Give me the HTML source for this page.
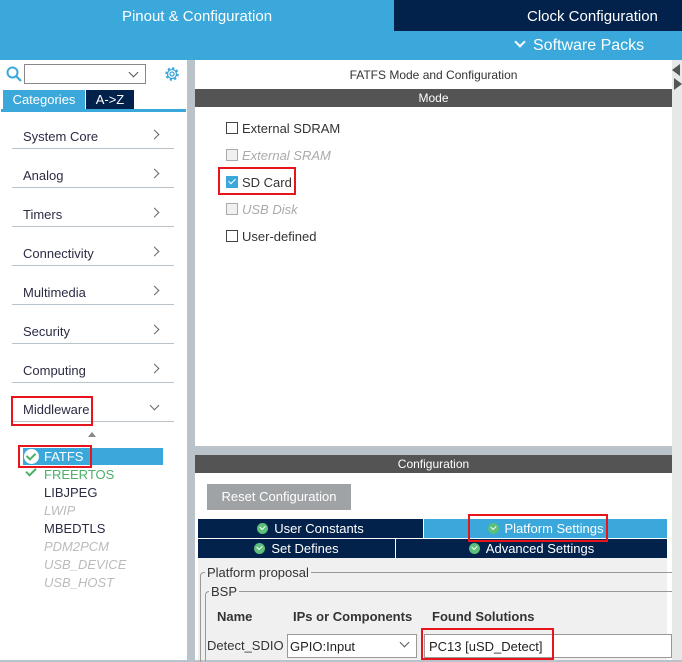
<!DOCTYPE html>
<html><head><style>
*{margin:0;padding:0;box-sizing:border-box}
body{width:682px;height:660px;overflow:hidden;font-family:"Liberation Sans",sans-serif;background:#b9c3c9;position:relative;font-size:13px}
.a{position:absolute}
.red{position:absolute;border:2px solid #e8141c}
.item{position:absolute;left:23px;color:#2c2c44;font-size:13px}
.line{position:absolute;left:12px;width:162px;height:1px;background:#b9c3c9}
.chev{position:absolute;left:151px;width:7px;height:7px;border-top:1px solid #666;border-right:1px solid #666;transform:rotate(45deg)}
.cb{position:absolute;left:226px;width:12px;height:12px;border:1px solid #444;background:#fff}
.cbl{position:absolute;left:242px;font-size:13px;color:#333}
.ck{display:inline-block;width:11px;height:11px;border-radius:50%;background:#5cbf7a;vertical-align:-1px;margin-right:6px;position:relative}
.ck:after{content:"";position:absolute;left:3px;top:2px;width:4px;height:3px;border-left:1.5px solid #fff;border-bottom:1.5px solid #fff;transform:rotate(-45deg)}
.tab{position:absolute;color:#fff;text-align:center;font-size:13px;line-height:19px;background:#03224b}
</style></head><body>
<div class="a" style="left:0;top:0;width:682px;height:60px;background:#3aa8db"></div>
<div class="a" style="left:0;top:8px;width:394px;text-align:center;color:#fff;font-size:15px;padding-left:0px">Pinout &amp; Configuration</div>
<div class="a" style="left:394px;top:0;width:288px;height:31px;background:#03224b"></div>
<div class="a" style="left:527px;top:8px;color:#fff;font-size:15px">Clock Configuration</div>
<div class="a" style="left:516px;top:37px;color:#fff;font-size:16px"><span style="display:inline-block;width:8px;height:8px;border-right:2px solid #fff;border-bottom:2px solid #fff;transform:rotate(45deg);margin-right:9px;vertical-align:4px"></span>Software Packs</div>

<!-- left panel -->
<div class="a" style="left:0;top:60px;width:187px;height:600px;background:#fff"></div>
<svg class="a" style="left:6px;top:66px" width="16" height="16"><circle cx="6.5" cy="6.5" r="5" fill="none" stroke="#3aa8db" stroke-width="2"/><line x1="10" y1="10" x2="15" y2="15" stroke="#3aa8db" stroke-width="2.2"/></svg>
<div class="a" style="left:24px;top:64px;width:122px;height:20px;border:1px solid #888;background:#fff"></div>
<div class="a" style="left:130px;top:69px;width:7px;height:7px;border-right:1px solid #555;border-bottom:1px solid #555;transform:rotate(45deg)"></div>
<svg class="a" style="left:163px;top:65px" width="18" height="18" viewBox="0 0 18 18"><circle cx="9" cy="9" r="5.5" fill="none" stroke="#3aa8db" stroke-width="2.5" stroke-dasharray="2.2 2.1"/><circle cx="9" cy="9" r="4.5" fill="none" stroke="#3aa8db" stroke-width="1.3"/><circle cx="9" cy="9" r="2" fill="none" stroke="#3aa8db" stroke-width="1.3"/></svg>
<div class="a" style="left:3px;top:90px;width:82px;height:19px;background:#3aa8db;color:#fff;font-size:13px;line-height:19px;text-align:center">Categories</div>
<div class="a" style="left:86px;top:90px;width:48px;height:19px;background:#03224b;color:#fff;font-size:13px;line-height:19px;text-align:center">A-&gt;Z</div>
<div class="a" style="left:1px;top:109px;width:185px;height:3px;background:#3aa8db"></div>

<div class="item" style="top:129px">System Core</div><div class="chev" style="top:131px"></div><div class="line" style="top:148px"></div>
<div class="item" style="top:168px">Analog</div><div class="chev" style="top:170px"></div><div class="line" style="top:187px"></div>
<div class="item" style="top:207px">Timers</div><div class="chev" style="top:209px"></div><div class="line" style="top:226px"></div>
<div class="item" style="top:246px">Connectivity</div><div class="chev" style="top:248px"></div><div class="line" style="top:265px"></div>
<div class="item" style="top:285px">Multimedia</div><div class="chev" style="top:287px"></div><div class="line" style="top:304px"></div>
<div class="item" style="top:324px">Security</div><div class="chev" style="top:326px"></div><div class="line" style="top:343px"></div>
<div class="item" style="top:363px">Computing</div><div class="chev" style="top:365px"></div><div class="line" style="top:382px"></div>
<div class="item" style="top:402px">Middleware</div><div class="chev" style="top:402px;transform:rotate(135deg)"></div><div class="line" style="top:421px"></div>
<div class="red" style="left:11px;top:396px;width:82px;height:30px"></div>
<div class="a" style="left:88px;top:432px;width:0;height:0;border-left:4px solid transparent;border-right:4px solid transparent;border-bottom:5px solid #888"></div>
<div class="a" style="left:23px;top:448px;width:140px;height:17px;background:#3aa8db"></div>
<div class="a" style="left:24px;top:449px;width:15px;height:15px;border-radius:50%;background:#fff"></div>
<div class="a" style="left:28px;top:451px;width:6px;height:9px;border-right:2.5px solid #4caf6a;border-bottom:2.5px solid #4caf6a;transform:rotate(45deg)"></div>
<div class="a" style="left:44px;top:449px;color:#fff;font-size:13px">FATFS</div>
<div class="red" style="left:18px;top:445px;width:74px;height:23px"></div>
<div class="a" style="left:28px;top:466px;width:6px;height:10px;border-right:2.5px solid #4caf6a;border-bottom:2.5px solid #4caf6a;transform:rotate(45deg)"></div>
<div class="a" style="left:44px;top:467px;color:#4caf6a">FREERTOS</div>
<div class="a" style="left:44px;top:485px;color:#2c2c44">LIBJPEG</div>
<div class="a" style="left:44px;top:503px;color:#bbb;font-style:italic">LWIP</div>
<div class="a" style="left:44px;top:521px;color:#2c2c44">MBEDTLS</div>
<div class="a" style="left:44px;top:539px;color:#bbb;font-style:italic">PDM2PCM</div>
<div class="a" style="left:44px;top:557px;color:#bbb;font-style:italic">USB_DEVICE</div>
<div class="a" style="left:44px;top:575px;color:#bbb;font-style:italic">USB_HOST</div>

<!-- right -->
<div class="a" style="left:195px;top:60px;width:477px;height:386px;background:#fff"></div>
<div class="a" style="left:672px;top:60px;width:10px;height:600px;background:#e8e8e8"></div>
<div class="a" style="left:672px;top:64px;width:0;height:0;border-top:6px solid transparent;border-bottom:6px solid transparent;border-right:8px solid #555"></div>
<div class="a" style="left:674px;top:78px;width:0;height:0;border-top:6px solid transparent;border-bottom:6px solid transparent;border-left:8px solid #555"></div>
<div class="a" style="left:195px;top:68px;width:477px;text-align:center;color:#333;font-size:12px">FATFS Mode and Configuration</div>
<div class="a" style="left:195px;top:89px;width:477px;height:18px;background:#545454;color:#fff;text-align:center;font-size:12px;line-height:18px">Mode</div>
<div class="cb" style="top:122px"></div><div class="cbl" style="top:121px">External SDRAM</div>
<div class="cb" style="top:149px;border-color:#aaa;background:#f0f0f0"></div><div class="cbl" style="top:148px;color:#aaa;font-style:italic">External SRAM</div>
<div class="cb" style="top:176px;background:#3aa8db;border-color:#3aa8db"></div><div class="a" style="left:230px;top:177px;width:4px;height:7px;border-right:1.5px solid #fff;border-bottom:1.5px solid #fff;transform:rotate(45deg)"></div><div class="cbl" style="top:175px">SD Card</div>
<div class="red" style="left:218px;top:167px;width:78px;height:28px"></div>
<div class="cb" style="top:203px;border-color:#aaa;background:#f0f0f0"></div><div class="cbl" style="top:202px;color:#aaa;font-style:italic">USB Disk</div>
<div class="cb" style="top:230px"></div><div class="cbl" style="top:229px">User-defined</div>

<div class="a" style="left:195px;top:455px;width:477px;height:205px;background:#fff"></div>
<div class="a" style="left:195px;top:455px;width:477px;height:18px;background:#545454;color:#fff;text-align:center;font-size:12px;line-height:18px">Configuration</div>
<div class="a" style="left:207px;top:484px;width:144px;height:26px;background:#a0a3a6;color:#fff;text-align:center;line-height:26px;font-size:13px">Reset Configuration</div>
<div class="tab" style="left:198px;top:519px;width:225px"><span class="ck"></span>User Constants</div>
<div class="tab" style="left:424px;top:519px;width:243px;background:#3aa8db"><span class="ck"></span>Platform Settings</div>
<div class="tab" style="left:198px;top:539px;width:197px"><span class="ck"></span>Set Defines</div>
<div class="tab" style="left:396px;top:539px;width:271px"><span class="ck"></span>Advanced Settings</div>
<div class="red" style="left:468px;top:514px;width:140px;height:28px"></div>
<div class="a" style="left:198px;top:558px;width:469px;height:102px;background:#f0f0f0"></div>
<div class="a" style="left:200px;top:572px;width:472px;height:90px;border-left:1px solid #999;border-top:1px solid #999;border-top-left-radius:4px"></div>
<div class="a" style="left:205px;top:565px;background:#f0f0f0;padding:0 2px;color:#333;font-size:13px">Platform proposal</div>
<div class="a" style="left:205px;top:591px;width:467px;height:70px;border-left:1px solid #999;border-top:1px solid #999;border-top-left-radius:4px"></div>
<div class="a" style="left:209px;top:584px;background:#f0f0f0;padding:0 2px;color:#333;font-size:13px">BSP</div>
<div class="a" style="left:217px;top:609px;color:#333;font-weight:bold;font-size:13px">Name</div>
<div class="a" style="left:293px;top:609px;color:#333;font-weight:bold;font-size:13px">IPs or Components</div>
<div class="a" style="left:432px;top:609px;color:#333;font-weight:bold;font-size:13px">Found Solutions</div>
<div class="a" style="left:207px;top:638px;color:#333;font-size:13px">Detect_SDIO</div>
<div class="a" style="left:287px;top:634px;width:130px;height:24px;border:1px solid #999;background:#fff;color:#222;font-size:13px;padding:4px 0 0 2px">GPIO:Input</div>
<div class="a" style="left:401px;top:639px;width:7px;height:7px;border-right:1px solid #555;border-bottom:1px solid #555;transform:rotate(45deg)"></div>
<div class="a" style="left:424px;top:634px;width:248px;height:24px;border:1px solid #999;background:#fff;color:#222;font-size:13px;padding:4px 0 0 4px">PC13 [uSD_Detect]</div>
<div class="red" style="left:421px;top:628px;width:133px;height:32px"></div>
</body></html>
